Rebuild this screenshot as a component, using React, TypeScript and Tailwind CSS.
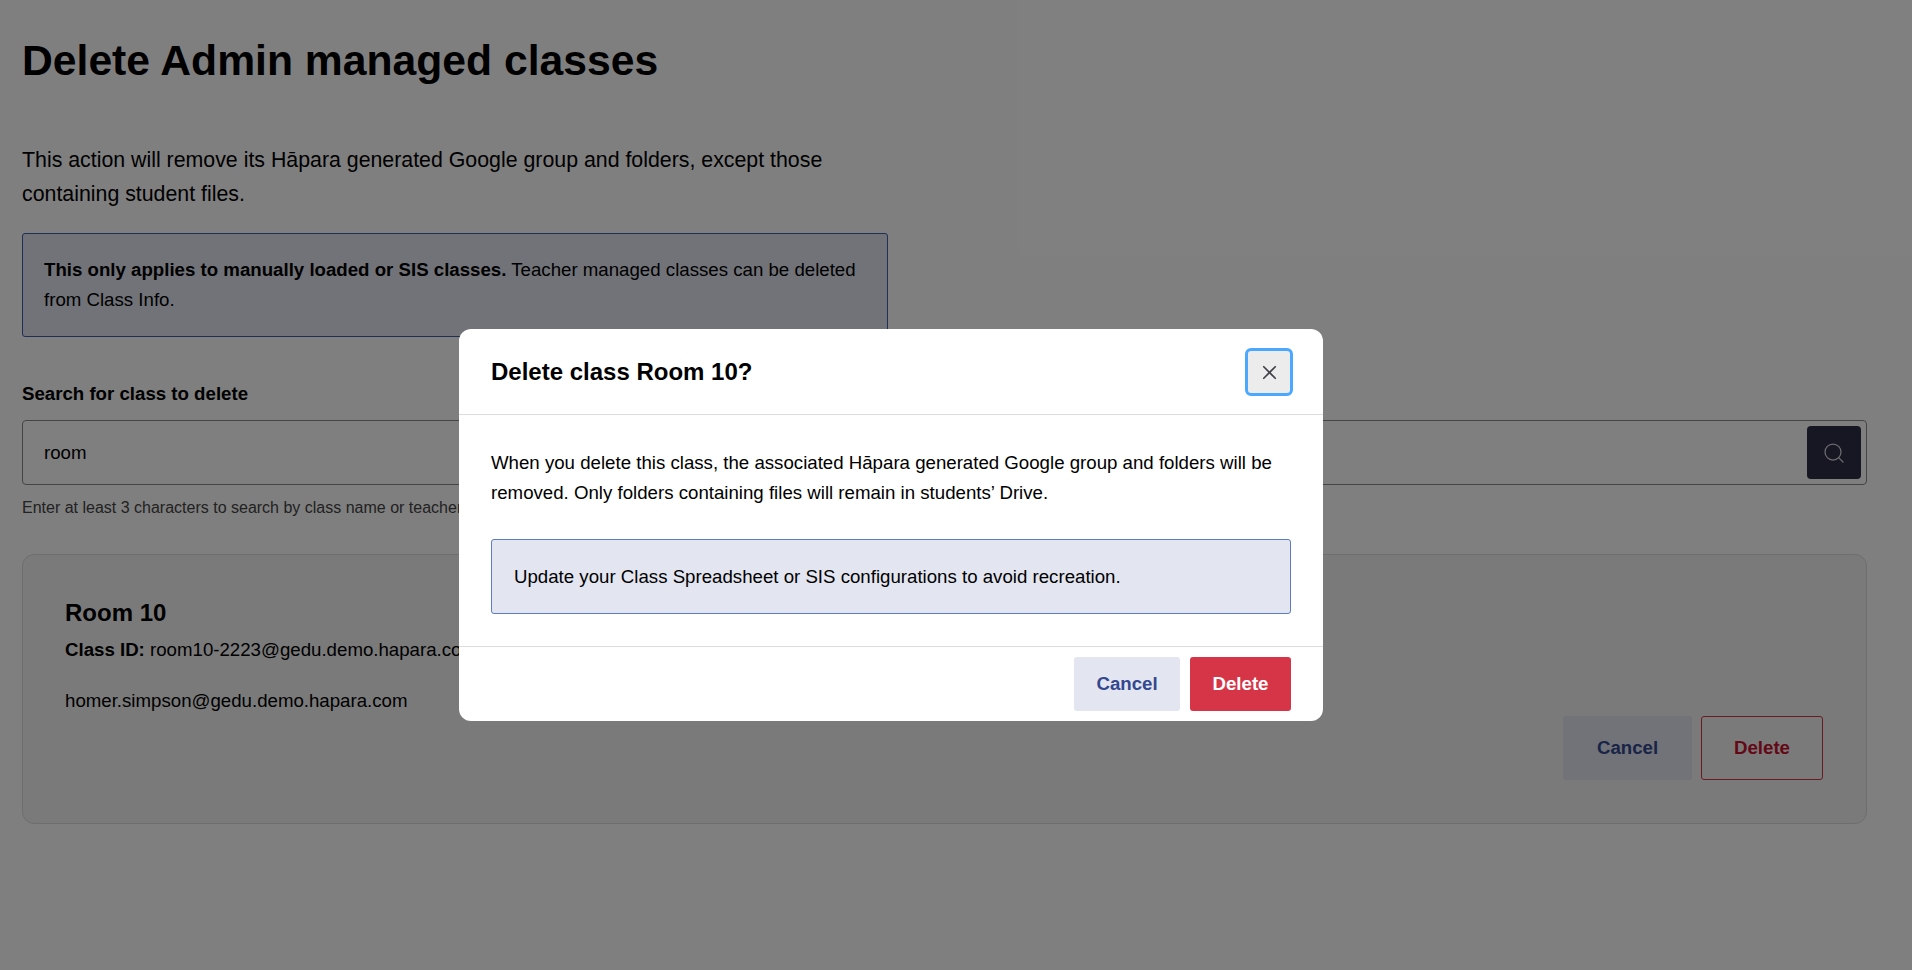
import { Search, X } from 'lucide-react'

const font = "font-['Liberation_Sans',Arial,sans-serif]"

function App() {
  return (
    <div className={`relative h-[970px] overflow-hidden bg-white text-black ${font}`}>
      <main className="pt-[32px] pr-[45px] pl-[22px]">
        <h1 className="text-[42.67px] leading-[56px] font-bold">Delete Admin managed classes</h1>

        <p className="mt-[55px] w-[840px] text-[21.33px] leading-[34px]">
          This action will remove its Hāpara generated Google group and folders, except those containing student files.
        </p>

        <div className="mt-[22px] w-[866px] rounded-[3px] border border-[#3f5eab] bg-[#e3e6f1] px-[21px] py-[21px] text-[18.67px] leading-[30px]">
          <strong>This only applies to manually loaded or SIS classes.</strong> Teacher managed classes can be deleted from Class Info.
        </div>

        <label className="mt-[44px] block text-[18.67px] leading-[26px] font-bold">Search for class to delete</label>
        <div className="mt-[13px] flex h-[65px] items-center justify-between rounded-[4px] border border-[#8a8a8a] pr-[5px] pl-[21px]">
          <span className="text-[18.67px]">room</span>
          <button className="flex h-[53px] w-[54px] items-center justify-center rounded-[4px] bg-[#2e2e48] text-[#d8d8dc]">
            <Search size={24} strokeWidth={1.25} />
          </button>
        </div>
        <p className="mt-[12px] text-[16px] leading-[22px] text-[#444]">Enter at least 3 characters to search by class name or teacher</p>

        <section className="mt-[35px] flex h-[270px] flex-col rounded-[12px] border border-[#dcdcdc] bg-[#f4f4f4] pt-[43px] pr-[43px] pl-[42px]">
          <h2 className="text-[24px] leading-[30px] font-bold">Room 10</h2>
          <p className="mt-[9px] text-[18.67px] leading-[26px]">
            <strong>Class ID:</strong> room10-2223@gedu.demo.hapara.com
          </p>
          <p className="mt-[25px] text-[18.67px] leading-[26px]">homer.simpson@gedu.demo.hapara.com</p>
          <div className="mt-[2px] flex justify-end gap-[9px]">
            <button className="h-[64px] w-[129px] rounded-[3px] bg-[#e3e6f1] text-[18.67px] font-bold text-[#33488f]">Cancel</button>
            <button className="h-[64px] w-[122px] rounded-[3px] border border-[#d63447] text-[18.67px] font-bold text-[#c8102e]">Delete</button>
          </div>
        </section>
      </main>

      <div className="absolute inset-0 bg-black/50" />

      <div role="dialog" className="absolute top-[329px] left-[459px] w-[864px] rounded-[12px] bg-white">
        <header className="flex h-[86px] items-center justify-between border-b border-[#dcdcdc] pt-[1px] pr-[30px] pl-[32px]">
          <h2 className="text-[24px] font-bold">Delete class Room 10?</h2>
          <button className="flex h-[48px] w-[48px] items-center justify-center rounded-[6px] border-[3px] border-[#4aa8ff] bg-[#ececec] text-[#3f3f46]">
            <X size={23} strokeWidth={1.75} />
          </button>
        </header>
        <div className="px-[32px] pt-[33px] pb-[32px]">
          <p className="text-[18.67px] leading-[30px]">
            When you delete this class, the associated Hāpara generated Google group and folders will be removed. Only folders containing files will remain in students’ Drive.
          </p>
          <div className="mt-[31px] flex h-[75px] items-center rounded-[3px] border border-[#5d7cc4] bg-[#e3e6f1] px-[22px] text-[18.67px]">
            Update your Class Spreadsheet or SIS configurations to avoid recreation.
          </div>
        </div>
        <footer className="flex h-[75px] items-center justify-end gap-[10px] border-t border-[#dcdcdc] pr-[32px]">
          <button className="h-[54px] w-[106px] rounded-[3px] bg-[#e3e6f1] text-[18.67px] font-bold text-[#33488f]">Cancel</button>
          <button className="h-[54px] w-[101px] rounded-[3px] bg-[#d63447] text-[18.67px] font-bold text-white">Delete</button>
        </footer>
      </div>
    </div>
  )
}

export default App
